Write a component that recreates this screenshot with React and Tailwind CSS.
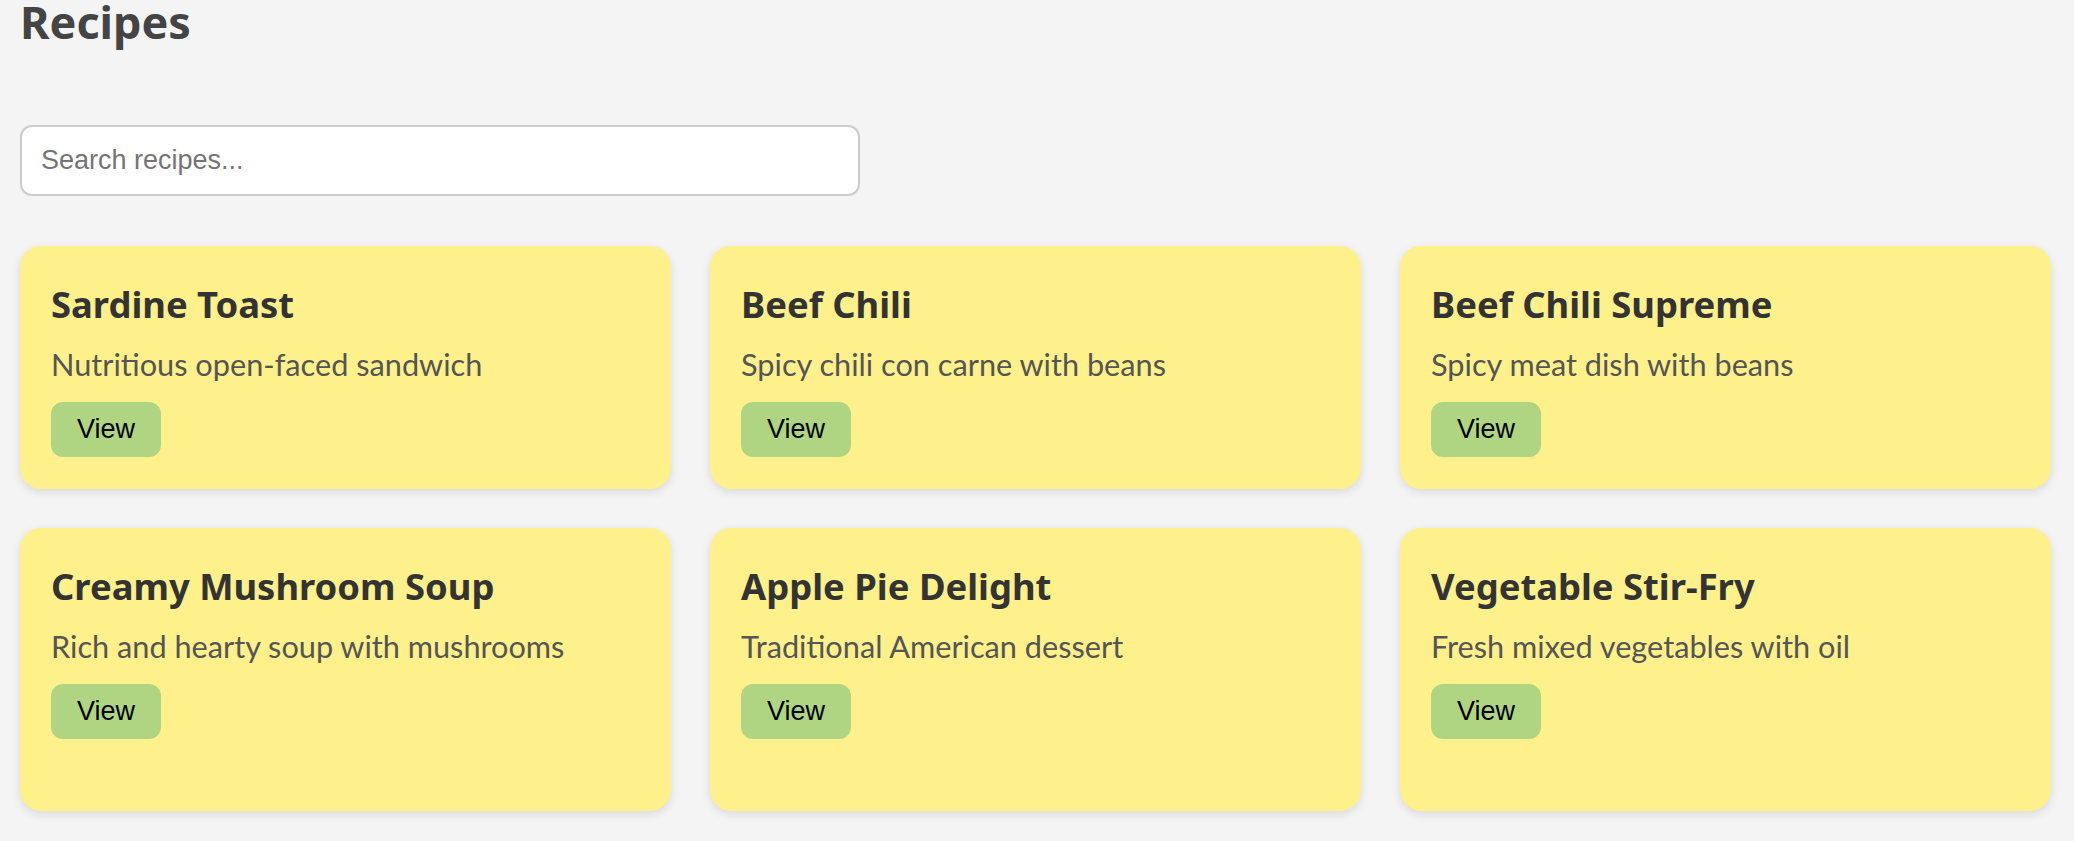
import React from "react";

const recipes = [
  { title: "Sardine Toast", desc: "Nutritious open-faced sandwich" },
  { title: "Beef Chili", desc: "Spicy chili con carne with beans" },
  { title: "Beef Chili Supreme", desc: "Spicy meat dish with beans" },
  { title: "Creamy Mushroom Soup", desc: "Rich and hearty soup with mushrooms" },
  { title: "Apple Pie Delight", desc: "Traditional American dessert" },
  { title: "Vegetable Stir-Fry", desc: "Fresh mixed vegetables with oil" },
];

function Card({ title, desc }) {
  return (
    <div className="bg-[#fef08a] rounded-[21px] shadow-[0_3px_10px_rgba(0,0,0,0.11)] pt-[30px] pb-[30px] pl-[31px] pr-[30px] flex flex-col items-start">
      <h2 className="text-[36.4px] leading-[56px] font-bold text-[#333333] font-['Noto_Sans',sans-serif]">
        {title}
      </h2>
      <p className="mt-[13px] text-[30.7px] leading-[40px] text-[#555555] font-['Lato',sans-serif]">
        {desc}
      </p>
      <button className="mt-[17px] bg-[#afd582] rounded-[12px] px-[26px] py-[12px] text-[27px] leading-[31px] text-black font-['Liberation_Sans',Arial,sans-serif]">
        View
      </button>
    </div>
  );
}

export default function App() {
  return (
    <div className="min-h-[841px] bg-[#f4f4f4] pl-[20px] pr-[23px] pt-[1px]">
      <h1 className="-mt-[1px] text-[45px] leading-[43px] font-bold text-[#444444] font-['Noto_Sans',sans-serif] mb-[82px]">
        Recipes
      </h1>
      <input
        type="text"
        placeholder="Search recipes..."
        className="block w-[840px] h-[71px] bg-white border-2 border-[#cccccc] rounded-[12px] pl-[19px] text-[27px] text-[#333] placeholder:text-[#757575] outline-none font-['Liberation_Sans',Arial,sans-serif]"
      />
      <div className="mt-[50px] grid grid-cols-3 gap-[39px] grid-rows-[243px_283px]">
        {recipes.map((r) => (
          <Card key={r.title} title={r.title} desc={r.desc} />
        ))}
      </div>
    </div>
  );
}
